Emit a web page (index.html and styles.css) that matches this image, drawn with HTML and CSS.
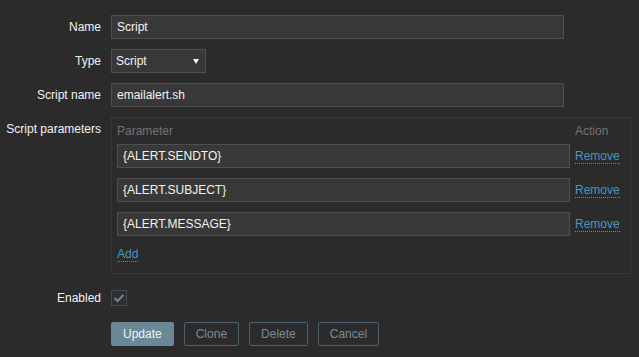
FILE: index.html
```html
<!DOCTYPE html>
<html>
<head>
<meta charset="utf-8">
<link rel="stylesheet" href="styles.css">
</head>
<body>
<form class="form">
  <div class="row">
    <label class="lbl">Name</label>
    <div class="field"><input class="text wide" type="text" value="Script"></div>
  </div>
  <div class="row">
    <label class="lbl">Type</label>
    <div class="field">
      <div class="select"><span>Script</span><span class="arrow"></span></div>
    </div>
  </div>
  <div class="row">
    <label class="lbl">Script name</label>
    <div class="field"><input class="text wide" type="text" value="emailalert.sh"></div>
  </div>
  <div class="row">
    <label class="lbl">Script parameters</label>
    <div class="field">
      <div class="params">
        <div class="prow head">
          <span class="pcol">Parameter</span>
          <span class="acol">Action</span>
        </div>
        <div class="prow">
          <input class="text pcol" type="text" value="{ALERT.SENDTO}">
          <span class="acol"><a class="link">Remove</a></span>
        </div>
        <div class="prow">
          <input class="text pcol" type="text" value="{ALERT.SUBJECT}">
          <span class="acol"><a class="link">Remove</a></span>
        </div>
        <div class="prow">
          <input class="text pcol" type="text" value="{ALERT.MESSAGE}">
          <span class="acol"><a class="link">Remove</a></span>
        </div>
        <div class="addrow"><a class="link">Add</a></div>
      </div>
    </div>
  </div>
  <div class="row enabled">
    <label class="lbl">Enabled</label>
    <div class="field">
      <span class="check"><svg width="12" height="10" viewBox="0 0 12 10"><path d="M1.5 5 L4.5 8 L10.5 2" fill="none" stroke="#6b8594" stroke-width="2"/></svg></span>
    </div>
  </div>
  <div class="row buttons">
    <span class="lbl"></span>
    <div class="field btns">
      <button type="button" class="btn primary">Update</button>
      <button type="button" class="btn alt">Clone</button>
      <button type="button" class="btn alt">Delete</button>
      <button type="button" class="btn alt">Cancel</button>
    </div>
  </div>
</form>
</body>
</html>
```
FILE: styles.css
```css
html, body {
  margin: 0;
  padding: 0;
  background: #2b2b2b;
}
body {
  font-family: "Liberation Sans", Arial, sans-serif;
  font-size: 12px;
  color: #f2f2f2;
}
.form {
  display: flex;
  flex-direction: column;
  gap: 10px;
  padding-top: 15px;
}
.row {
  display: flex;
  align-items: flex-start;
  gap: 10px;
}
.lbl {
  width: 101px;
  flex: none;
  text-align: right;
  line-height: 24px;
  color: #f2f2f2;
}
.field {
  display: flex;
}
.text {
  box-sizing: border-box;
  height: 24px;
  margin: 0;
  padding: 0 5px;
  background: #383838;
  border: 1px solid #4f4f4f;
  color: #f2f2f2;
  font-family: inherit;
  font-size: 12px;
  outline: none;
}
.wide {
  width: 453px;
}
.select {
  box-sizing: border-box;
  width: 95px;
  height: 24px;
  background: #383838;
  border: 1px solid #4f4f4f;
  padding: 0 4px;
  display: flex;
  align-items: center;
  justify-content: space-between;
  line-height: 22px;
}
.arrow {
  width: 0;
  height: 0;
  border-left: 3.5px solid transparent;
  border-right: 3.5px solid transparent;
  border-top: 5px solid #f2f2f2;
  margin-right: 2px;
  margin-top: 1px;
}
.params {
  box-sizing: border-box;
  width: 520px;
  border: 1px solid #383838;
  padding: 5px 5px 11px 5px;
  display: flex;
  flex-direction: column;
  gap: 10px;
}
.prow {
  display: flex;
  align-items: center;
  gap: 5px;
}
.prow.head {
  line-height: 16px;
  color: #737373;
  margin-bottom: -5px;
}
.pcol {
  width: 453px;
  flex: none;
}
.acol {
  flex: 1;
}
.link {
  color: #4796c4;
  text-decoration: none;
  border-bottom: 1px dotted #4796c4;
  cursor: pointer;
  line-height: 14px;
  display: inline-block;
}
.addrow {
  display: flex;
  padding-top: 1px;
}
.enabled {
  margin-top: 2px;
}
.enabled .field {
  height: 24px;
  align-items: center;
}
.check {
  box-sizing: border-box;
  width: 16px;
  height: 16px;
  border: 1px solid #4a4a4a;
  background: #2e2e2e;
  display: flex;
  align-items: center;
  justify-content: center;
}
.buttons {
  margin-top: 2px;
}
.btns {
  gap: 10px;
}
.btn {
  box-sizing: border-box;
  height: 24px;
  padding: 0 11px;
  margin: 0;
  font-family: inherit;
  font-size: 12px;
  border-radius: 2px;
}
.primary {
  background: #6a8896;
  border: 1px solid #6a8896;
  color: #eef3f5;
}
.alt {
  background: transparent;
  border: 1px solid #4a6270;
  color: #7c8c96;
}
```
